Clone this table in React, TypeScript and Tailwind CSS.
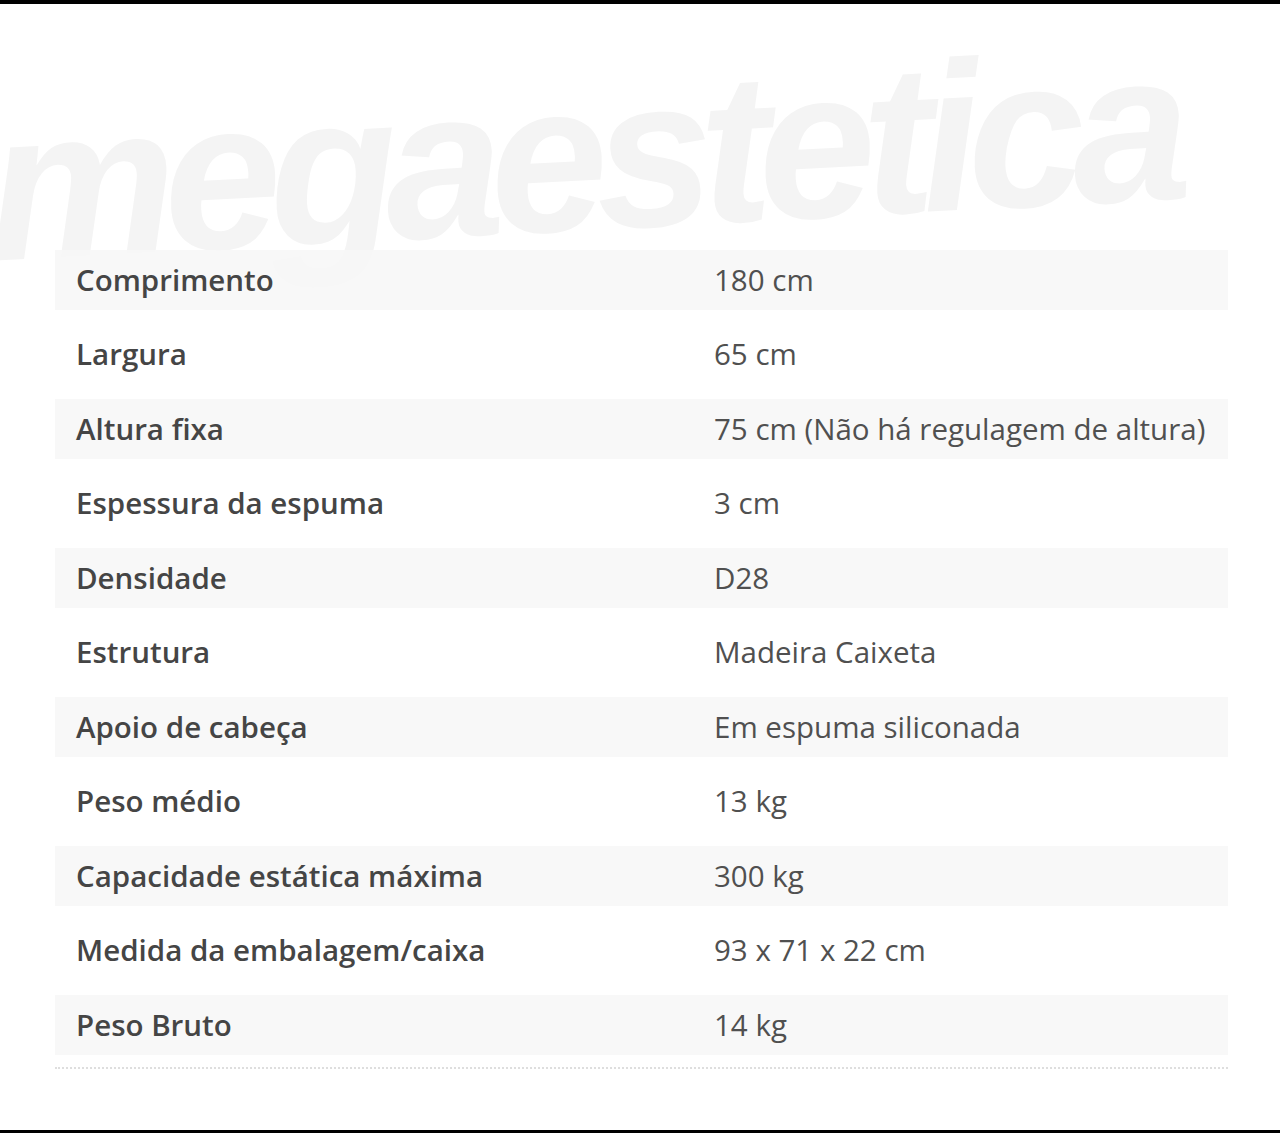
const specs: [string, string][] = [
  ['Comprimento', '180 cm'],
  ['Largura', '65 cm'],
  ['Altura fixa', '75 cm (Não há regulagem de altura)'],
  ['Espessura da espuma', '3 cm'],
  ['Densidade', 'D28'],
  ['Estrutura', 'Madeira Caixeta'],
  ['Apoio de cabeça', 'Em espuma siliconada'],
  ['Peso médio', '13 kg'],
  ['Capacidade estática máxima', '300 kg'],
  ['Medida da embalagem/caixa', '93 x 71 x 22 cm'],
  ['Peso Bruto', '14 kg'],
]

export default function App() {
  return (
    <div className="flex h-[1133px] w-[1280px] flex-col bg-white font-['Open_Sans',sans-serif]">
      <div className="h-[4px] bg-black" />

      <div className="relative flex-1 overflow-hidden">
        {/* marca d'água */}
        <div className="pointer-events-none absolute left-[-18px] top-[78px] origin-top-left -rotate-[3deg] select-none whitespace-nowrap font-['Liberation_Sans',sans-serif] text-[212px] font-bold italic leading-none tracking-[-0.06em] text-[#f4f4f4]">
          megaestetica
        </div>

        <div className="relative pl-[55px] pr-[52px] pt-[246px]">
          <div className="flex flex-col">
            {specs.map(([label, value], i) => (
              <div
                key={label}
                className={
                  i % 2 === 0
                    ? 'flex h-[60px] items-center bg-[#f7f7f7]/90'
                    : 'flex h-[89px] items-center'
                }
              >
                <div className="w-[659px] pl-[21px] text-[29.5px] font-semibold text-[#454545]">
                  {label}
                </div>
                <div className="flex-1 text-[29.5px] text-[#505050]">{value}</div>
              </div>
            ))}
          </div>
          <div className="mt-[12px] border-b-2 border-dotted border-[#dedede]" />
        </div>
      </div>

      <div className="h-[3px] bg-black" />
    </div>
  )
}
